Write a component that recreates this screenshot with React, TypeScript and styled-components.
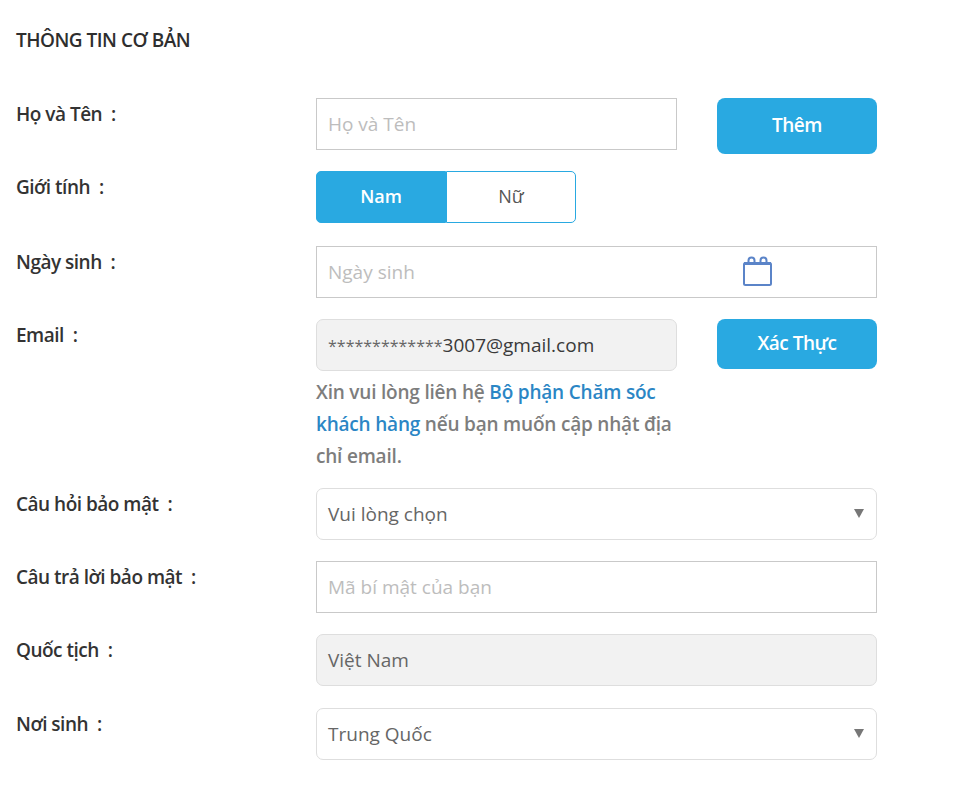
import React from "react";
import styled, { createGlobalStyle } from "styled-components";

const GlobalStyle = createGlobalStyle`
  html, body {
    margin: 0;
    padding: 0;
    background: #fff;
    font-family: "Open Sans", "Liberation Sans", sans-serif;
  }
`;

export default function App() {
  return (
    <Page>
      <GlobalStyle />
      <Title>THÔNG TIN CƠ BẢN</Title>

      <Row>
        <Label>Họ và Tên&nbsp; :</Label>
        <Field $width={361}>
          <Placeholder>Họ và Tên</Placeholder>
        </Field>
        <ActionButton $height={56}>Thêm</ActionButton>
      </Row>

      <Row $after={23}>
        <Label>Giới tính&nbsp; :</Label>
        <GenderGroup>
          <GenderOption $active>Nam</GenderOption>
          <GenderOption>Nữ</GenderOption>
        </GenderGroup>
      </Row>

      <Row>
        <Label>Ngày sinh&nbsp; :</Label>
        <Field>
          <Placeholder>Ngày sinh</Placeholder>
          <CalendarIcon viewBox="0 0 29 30" fill="none">
            <rect x="1" y="7" width="27" height="22" rx="1.5" stroke="#5b84c8" strokeWidth="2" />
            <path d="M1 7.5h27" stroke="#5b84c8" strokeWidth="3" />
            <path d="M5.5 7V4.5a3 3 0 0 1 6 0V7M17.5 7V4.5a3 3 0 0 1 6 0V7" stroke="#5b84c8" strokeWidth="2" />
          </CalendarIcon>
        </Field>
      </Row>

      <Row $after={0}>
        <Label>Email&nbsp; :</Label>
        <Field $width={361} $locked $rounded>
          <Value>
            <Mask>*************</Mask>3007@gmail.com
          </Value>
        </Field>
        <ActionButton $height={50}>Xác Thực</ActionButton>
      </Row>
      <Note>
        Xin vui lòng liên hệ <NoteLink>Bộ phận Chăm sóc khách hàng</NoteLink> nếu bạn muốn cập nhật địa chỉ email.
      </Note>

      <Row>
        <Label>Câu hỏi bảo mật&nbsp; :</Label>
        <Field $rounded>
          <Value $soft>Vui lòng chọn</Value>
          <Caret />
        </Field>
      </Row>

      <Row>
        <Label>Câu trả lời bảo mật&nbsp; :</Label>
        <Field>
          <Placeholder>Mã bí mật của bạn</Placeholder>
        </Field>
      </Row>

      <Row $after={22}>
        <Label>Quốc tịch&nbsp; :</Label>
        <Field $locked $rounded>
          <Value $soft>Việt Nam</Value>
        </Field>
      </Row>

      <Row>
        <Label>Nơi sinh&nbsp; :</Label>
        <Field $rounded>
          <Value $soft>Trung Quốc</Value>
          <Caret />
        </Field>
      </Row>
    </Page>
  );
}

const Page = styled.div`
  width: 977px;
  height: 800px;
  box-sizing: border-box;
  padding: 28px 0 0 16px;
  overflow: hidden;
  color: #333;
`;

const Title = styled.h2`
  margin: 0 0 46px;
  height: 24px;
  font-size: 19px;
  line-height: 24px;
  font-weight: 600;
  letter-spacing: -0.5px;
  color: #2e2e2e;
`;

const Row = styled.div<{ $after?: number }>`
  display: flex;
  height: 52px;
  margin-bottom: ${(p) => p.$after ?? 21}px;
`;

const Label = styled.div`
  flex: 0 0 300px;
  padding-top: 3px;
  font-size: 19px;
  line-height: 26px;
  font-weight: 600;
  letter-spacing: -0.5px;
  color: #333;
`;

const Field = styled.div<{ $width?: number; $locked?: boolean; $rounded?: boolean }>`
  position: relative;
  box-sizing: border-box;
  flex: 0 0 ${(p) => p.$width ?? 561}px;
  height: 52px;
  display: flex;
  align-items: center;
  padding: 0 11px 1px;
  background: ${(p) => (p.$locked ? "#f2f2f2" : "#fff")};
  border: 1.5px solid ${(p) => (p.$rounded ? "#dedede" : "#c9c9c9")};
  border-radius: ${(p) => (p.$rounded ? "7px" : "0")};
`;

const Placeholder = styled.span`
  font-size: 19px;
  color: #bdbdbd;
`;

const Value = styled.span<{ $soft?: boolean }>`
  font-size: 19px;
  color: ${(p) => (p.$soft ? "#666" : "#3a3a3a")};
`;

const Mask = styled.span`
  font-size: 16px;
  color: #666;
`;

const ActionButton = styled.button<{ $height: number }>`
  flex: 0 0 160px;
  height: ${(p) => p.$height}px;
  margin-left: 40px;
  padding: 0 0 2px;
  border: 0;
  border-radius: 8px;
  background: #29a9e1;
  color: #fff;
  font-family: inherit;
  font-size: 19px;
  font-weight: 600;
  letter-spacing: -0.5px;
`;

const GenderGroup = styled.div`
  display: flex;
`;

const GenderOption = styled.div<{ $active?: boolean }>`
  box-sizing: border-box;
  width: 130px;
  height: 52px;
  display: flex;
  align-items: center;
  justify-content: center;
  padding-bottom: 2px;
  border: 1.5px solid #29a9e1;
  border-radius: ${(p) => (p.$active ? "5px 0 0 5px" : "0 5px 5px 0")};
  background: ${(p) => (p.$active ? "#29a9e1" : "#fff")};
  color: ${(p) => (p.$active ? "#fff" : "#555")};
  font-size: 18px;
  font-weight: ${(p) => (p.$active ? 600 : 400)};
`;

const CalendarIcon = styled.svg`
  position: absolute;
  left: 426px;
  top: 9px;
  width: 29px;
  height: 30px;
`;

const Caret = styled.span`
  position: absolute;
  right: 12px;
  top: 20px;
  width: 0;
  height: 0;
  border-left: 5.5px solid transparent;
  border-right: 5.5px solid transparent;
  border-top: 9px solid #777;
`;

const Note = styled.p`
  width: 361px;
  margin: 5px 0 16px 300px;
  font-size: 19px;
  line-height: 32px;
  font-weight: 600;
  letter-spacing: -0.2px;
  color: #7d7d7d;
`;

const NoteLink = styled.span`
  color: #2b86c5;
`;
